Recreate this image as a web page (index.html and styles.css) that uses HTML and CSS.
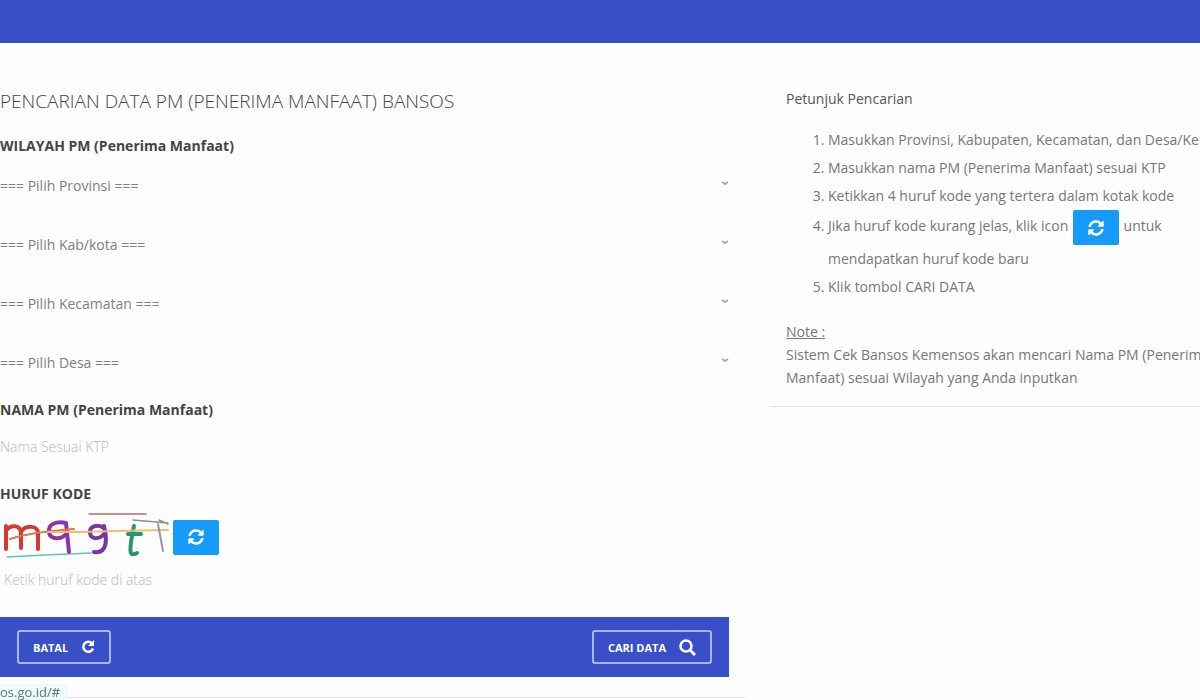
FILE: index.html
```html
<!DOCTYPE html>
<html lang="id">
<head>
  <meta charset="utf-8">
  <meta name="viewport" content="width=device-width, initial-scale=1">
  <title>Cek Bansos</title>
  <link rel="stylesheet" href="styles.css">
</head>
<body>
  <svg class="sprite" aria-hidden="true">
    <symbol id="icon-refresh" viewBox="0 0 512 512">
      <path d="M370.7 133.3C339.5 104 298.900 88 255.800 88c-77.500.1-144.300 53.200-162.800 126.900-1.300 5.400-6.100 9.100-11.700 9.100H24.100c-7.500 0-13.200-6.800-11.800-14.200C33.900 94.900 134.800 8 256 8c66.400 0 126.800 26.100 171.300 68.700L463 41c15.100-15.100 41-4.400 41 17v134c0 13.300-10.700 24-24 24H346c-21.400 0-32.100-25.900-17-41l41.700-41.700zM32 296h134c21.400 0 32.100 25.900 17 41l-41.800 41.800c31.300 29.300 71.800 45.300 114.900 45.300 77.400-.1 144.300-53.100 162.800-126.800 1.300-5.400 6.100-9.100 11.700-9.100h57.300c7.500 0 13.200 6.800 11.800 14.200C478.100 417.100 377.200 504 256 504c-66.400 0-126.800-26.100-171.300-68.700L49 471c-15.100 15.100-41 4.400-41-17V320c0-13.300 10.700-24 24-24z"/>
    </symbol>
  </svg>
  <header class="topbar"></header>
  <main class="layout">
    <form class="search">
      <h1>PENCARIAN DATA PM (PENERIMA MANFAAT) BANSOS</h1>
      <h2>WILAYAH PM (Penerima Manfaat)</h2>
      <div class="regions">
        <div class="select-box">
          <select id="provinsi" aria-label="Provinsi">
            <option>=== Pilih Provinsi ===</option>
          </select>
          <svg class="caret" viewBox="0 0 8 5"><path d="M1 1l3 2 3-2"/></svg>
        </div>
        <div class="select-box">
          <select id="kabupaten" aria-label="Kab/kota">
            <option>=== Pilih Kab/kota ===</option>
          </select>
          <svg class="caret" viewBox="0 0 8 5"><path d="M1 1l3 2 3-2"/></svg>
        </div>
        <div class="select-box">
          <select id="kecamatan" aria-label="Kecamatan">
            <option>=== Pilih Kecamatan ===</option>
          </select>
          <svg class="caret" viewBox="0 0 8 5"><path d="M1 1l3 2 3-2"/></svg>
        </div>
        <div class="select-box">
          <select id="desa" aria-label="Desa">
            <option>=== Pilih Desa ===</option>
          </select>
          <svg class="caret" viewBox="0 0 8 5"><path d="M1 1l3 2 3-2"/></svg>
        </div>
      </div>
      <label class="title" for="nama">NAMA PM (Penerima Manfaat)</label>
      <input type="text" id="nama" placeholder="Nama Sesuai KTP">
      <label class="title" for="kode">HURUF KODE</label>
      <div class="captcha">
        <svg class="captcha-img" viewBox="0 0 173 50" role="img" aria-label="Huruf kode">
          <g fill="none" stroke-linecap="round" stroke-linejoin="round">
            <path stroke="#5fc4b9" stroke-width="1.500" d="M7 45l38-2 46-2"/>
            <path stroke="#d23a32" stroke-width="4" d="M6 37V14M6 19c4-7 14-6 15 1v16M21 20c4-7 17-7 17 1v16"/>
            <path stroke="#8d35a8" stroke-width="4" d="M66 11c-10-2-18 1-17 9 1 8 12 8 17 2M66 11l3 29"/>
            <path stroke="#78369f" stroke-width="4" d="M104 16c-7-5-15-1-14 5 1 8 12 6 15-1M104 14c3 12 4 28-10 26"/>
            <path stroke="#25976a" stroke-width="4" d="M134 14c-2 10-5 22-3 27 1 2 4 1 6 0M128 22l13 0"/>
            <path stroke="#e27849" stroke-width="2" d="M10 27c19-6 34-7 64-10"/>
            <path stroke="#f0bd72" stroke-width="2" d="M48 20l32 0 35-1 53-1"/>
            <path stroke="#aa7069" stroke-width="1.500" d="M89 2h57"/>
            <path stroke="#85958c" stroke-width="1.500" d="M133 8l35 3M159 8l9 4"/>
            <path stroke="#9b91b6" stroke-width="2" d="M158 12l5 27"/>
          </g>
        </svg>
        <button type="button" class="refresh" aria-label="Ganti huruf kode"><svg><use href="#icon-refresh"/></svg></button>
      </div>
      <input type="text" id="kode" class="code-input" placeholder="Ketik huruf kode di atas">
      <div class="actions">
        <button type="reset" class="outline">BATAL
          <svg viewBox="0 0 14 14"><path fill="none" stroke="currentColor" stroke-width="2.500" d="M11 3.500a5 5 0 1 0 1 5"/><path fill="currentColor" d="M13 0v6H7z"/></svg>
        </button>
        <button type="submit" class="outline">CARI DATA
          <svg class="search-icon" viewBox="0 0 17 17"><g fill="none" stroke="currentColor"><circle cx="7" cy="7" r="5.500" stroke-width="2.500"/><path stroke-width="3" d="M11 11l5 5"/></g></svg>
        </button>
      </div>
    </form>
    <aside class="guide">
      <h3>Petunjuk Pencarian</h3>
      <ol>
        <li>Masukkan Provinsi, Kabupaten, Kecamatan, dan Desa/Kelurahan</li>
        <li>Masukkan nama PM (Penerima Manfaat) sesuai KTP</li>
        <li>Ketikkan 4 huruf kode yang tertera dalam kotak kode</li>
        <li>Jika huruf kode kurang jelas, klik icon <button type="button" class="refresh" aria-label="Ganti huruf kode"><svg><use href="#icon-refresh"/></svg></button> untuk<br>mendapatkan huruf kode baru</li>
        <li>Klik tombol CARI DATA</li>
      </ol>
      <p><u>Note :</u><br>Sistem Cek Bansos Kemensos akan mencari Nama PM (Penerima<br>Manfaat) sesuai Wilayah yang Anda inputkan</p>
    </aside>
  </main>
  <div class="status">os.go.id/#</div>
</body>
</html>
```
FILE: styles.css
```css
* {
  box-sizing: border-box;
}
body {
  margin: 0;
  background: #fdfdfd;
  color: #777;
  font-family: "Open Sans", "Noto Sans", sans-serif;
  font-size: 14px;
  overflow-x: hidden;
}
.sprite {
  display: none;
}
.topbar {
  height: 43px;
  background: #394fc8;
}
.layout {
  display: grid;
  grid-template-columns: minmax(0, 745fr) minmax(0, 430fr);
  gap: 25px;
  align-items: start;
}
.search {
  padding: 46px 16px 20px 0;
  border-bottom: 1px solid #e4e4e6;
}
h1, h2, h3, p, ol {
  margin: 0;
}
h1 {
  color: #444;
  font-size: 19px;
  font-weight: 300;
  line-height: 24px;
}
h2, .title {
  display: block;
  color: #444;
  font-size: 14px;
  font-weight: 700;
  line-height: 20px;
}
h2 {
  margin: 23px 0 12px;
}
.regions {
  display: grid;
  gap: 25px;
  margin-bottom: 21px;
}
.select-box {
  position: relative;
}
select, input {
  display: block;
  width: 100%;
  height: 34px;
  padding: 0;
  border: 0;
  background: transparent;
  color: #808080;
  font: inherit;
  appearance: none;
}
.caret {
  position: absolute;
  top: 13px;
  right: 0;
  width: 8px;
  height: 5px;
  fill: none;
  stroke: #aaa;
  stroke-width: 2;
  pointer-events: none;
}
input {
  margin: 9px 0 21px;
}
input::placeholder {
  color: #b8b8b8;
  font-weight: 300;
  opacity: 1;
}
.captcha {
  display: flex;
  align-items: center;
  height: 50px;
  margin-top: 8px;
}
.captcha-img {
  width: 173px;
  height: 50px;
}
.refresh {
  display: inline-flex;
  align-items: center;
  justify-content: center;
  width: 46px;
  height: 35px;
  padding: 0;
  border: 0;
  border-radius: 2px;
  background: #179bfa;
  color: #fff;
  vertical-align: middle;
}
.refresh svg {
  width: 16px;
  height: 16px;
  fill: currentColor;
}
li .refresh {
  margin: 0 1px;
}
.code-input {
  margin-top: 0;
  padding-left: 4px;
}
.actions {
  display: flex;
  align-items: center;
  justify-content: space-between;
  height: 60px;
  padding: 0 17px;
  background: #394fc8;
}
.outline {
  display: flex;
  align-items: center;
  gap: 13px;
  height: 34px;
  padding: 0 14px;
  border: 2px solid #a9b4ff;
  border-radius: 3px;
  background: transparent;
  color: #fff;
  font: inherit;
  font-size: 11px;
  font-weight: 700;
}
.outline svg {
  width: 14px;
  height: 14px;
}
.outline .search-icon {
  width: 17px;
  height: 17px;
}
.guide {
  padding: 46px 0 17px 16px;
  border-bottom: 1px solid #e4e4e6;
  white-space: nowrap;
  overflow: hidden;
}
h3 {
  color: #555;
  font-size: 14px;
  font-weight: 400;
  line-height: 20px;
}
ol {
  margin: 17px 0 19px;
  padding-left: 42px;
}
li {
  line-height: 28px;
}
p {
  line-height: 23px;
}
.status {
  position: fixed;
  bottom: 0;
  left: 0;
  width: 68px;
  height: 16px;
  background: #effaff;
  color: #577;
  font-size: 13px;
  line-height: 16px;
}
```
